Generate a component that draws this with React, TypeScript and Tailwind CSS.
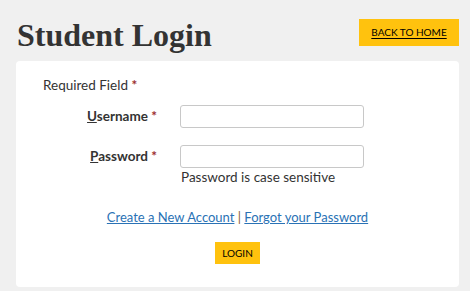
import React from 'react';

const App: React.FC = () => {
  return (
    <div className="min-h-screen w-[470px] h-[291px] overflow-hidden bg-[#f0f0f0] pl-4 pr-[11px] pt-[19px]" style={{ fontFamily: 'Lato, "Open Sans", sans-serif' }}>
      {/* Header */}
      <div className="flex items-start justify-between h-[42px]">
        <h1 className="pl-[1px] text-[32px] leading-[32px] font-bold text-[#333]" style={{ fontFamily: '"Liberation Serif", serif' }}>
          Student Login
        </h1>
        <button className="w-[100px] h-[27px] bg-[#ffc20e] text-[10px] text-black underline underline-offset-2">
          BACK TO HOME
        </button>
      </div>

      {/* Card */}
      <div className="w-[443px] h-[226px] bg-white rounded-[4px] pl-[27px] pt-[13px] text-[13.5px] text-[#333]">
        <div className="h-[22px] leading-[22px]">
          Required Field <span className="text-[#9b2d2d] font-bold">*</span>
        </div>

        <div className="mt-[9px] grid grid-cols-[114px_184px] gap-x-[23px] gap-y-[17px] items-start">
          <label className="text-right font-bold leading-[23px]">
            <span className="underline">U</span>sername <span className="text-[#9b2d2d]">*</span>
          </label>
          <input className="h-[23px] border border-[#c8c8c8] rounded-[3px]" />

          <label className="text-right font-bold leading-[23px]">
            <span className="underline">P</span>assword <span className="text-[#9b2d2d]">*</span>
          </label>
          <div>
            <input type="password" className="block w-full h-[23px] border border-[#c8c8c8] rounded-[3px]" />
            <div className="pl-[1px] leading-[18px]">Password is case sensitive</div>
          </div>
        </div>

        <div className="mt-[21px] pr-[27px] text-center text-[13px] leading-[20px]">
          <a className="text-[#2a72b5] underline" href="#">Create a New Account</a>
          <span className="text-[#8a5a2b]"> | </span>
          <a className="text-[#2a72b5] underline" href="#">Forgot your Password</a>
        </div>

        <div className="mt-[15px] pr-[27px] flex justify-center">
          <button className="w-[45px] h-[22px] bg-[#ffc20e] text-[10px] text-black">LOGIN</button>
        </div>
      </div>
    </div>
  );
};

export default App;
